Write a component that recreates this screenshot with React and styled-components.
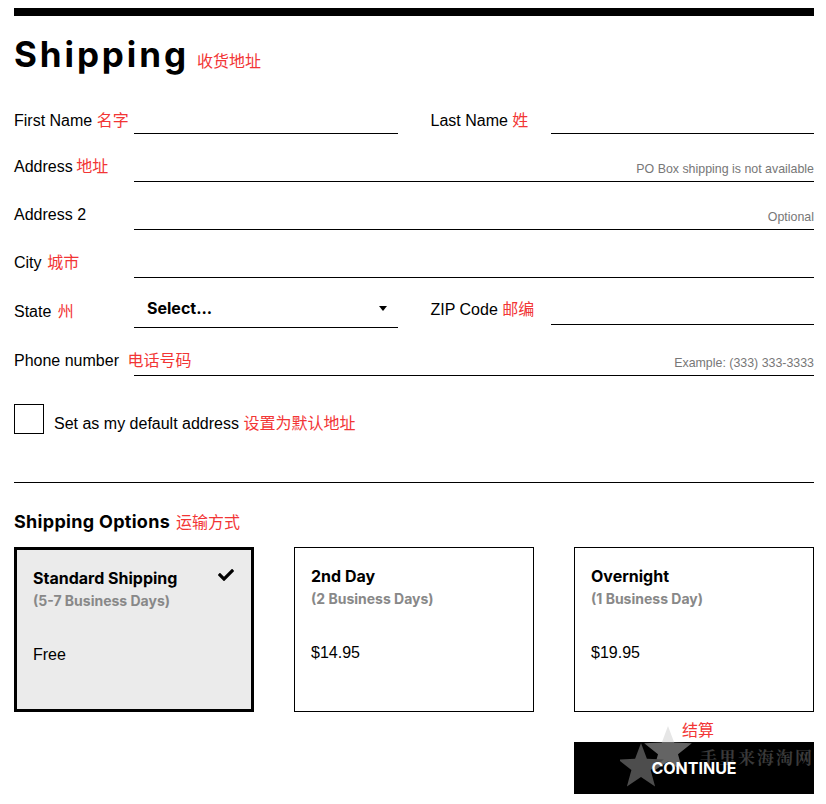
import React from "react";
import styled, { createGlobalStyle } from "styled-components";
import { FaCheck } from "react-icons/fa";

const GlobalStyle = createGlobalStyle`
  html, body { margin: 0; padding: 0; background: #fff; }
  body { font-family: "Liberation Sans", Arial, sans-serif; color: #000; }
  * { box-sizing: border-box; }
`;

const Page = styled.div`
  width: 826px;
  padding: 8px 12px 0 14px;
`;

const TopBar = styled.div`
  height: 8px;
  background: #000;
`;

const TitleRow = styled.div`
  height: 70px;
  display: flex;
  align-items: baseline;
  padding-top: 18px;
`;

const Title = styled.h1`
  margin: 0;
  font-family: Inter, "Noto Sans", sans-serif;
  font-weight: 700;
  font-size: 35px;
  line-height: 40px;
  letter-spacing: 2.9px;
`;

const Note = styled.span`
  font-family: "Noto Sans CJK SC", sans-serif;
  font-size: 16px;
  font-weight: 400;
  color: #f23535;
  letter-spacing: 0;
  margin-left: ${(p) => p.$gap || 0}px;
`;

const Row = styled.div`
  display: flex;
  align-items: flex-end;
  gap: 33px;
  height: ${(p) => p.$h || 48}px;
`;

const Field = styled.div`
  flex: 1;
  display: flex;
  align-items: flex-end;
  margin-bottom: ${(p) => p.$mb || 0}px;
`;

const Label = styled.label`
  width: 120px;
  flex: none;
  white-space: nowrap;
  font-size: 16px;
  line-height: 20px;
  padding-bottom: ${(p) => p.$pb ?? 5}px;
  position: relative;
  z-index: 1;
`;

const LineBox = styled.div`
  flex: 1;
  min-width: 0;
  height: 30px;
  display: flex;
  align-items: flex-end;
  border-bottom: 1px solid #000;
`;

const TextInput = styled.input`
  flex: 1;
  min-width: 0;
  height: 100%;
  border: 0;
  outline: 0;
  background: transparent;
  font: inherit;
  padding: 0 0 4px 0;
`;

const Hint = styled.span`
  flex: none;
  font-family: "Liberation Sans", Arial, sans-serif;
  font-size: 12.4px;
  line-height: 14px;
  color: #777;
  padding-bottom: 5px;
`;

const SelectBox = styled.div`
  flex: 1;
  height: 40px;
  display: flex;
  align-items: center;
  justify-content: space-between;
  border-bottom: 1px solid #000;
  padding: 0 11px 0 13px;
  font-family: Inter, "Noto Sans", sans-serif;
  font-weight: 700;
  font-size: 16px;
  cursor: pointer;
`;

const Caret = styled.span`
  width: 0;
  height: 0;
  border-left: 4px solid transparent;
  border-right: 4px solid transparent;
  border-top: 5px solid #000;
  margin-top: 1px;
`;

const CheckRow = styled.div`
  display: flex;
  align-items: flex-end;
  margin-top: 28px;
`;

const Box = styled.div`
  width: 30px;
  height: 30px;
  border: 1px solid #000;
  flex: none;
`;

const CheckLabel = styled.span`
  margin-left: 10px;
  font-size: 16px;
  line-height: 20px;
`;

const Divider = styled.hr`
  margin: 48px 0 0 0;
  border: 0;
  border-top: 1px solid #000;
  height: 0;
`;

const SubTitle = styled.h2`
  margin: 27px 0 0 0;
  font-family: Inter, "Noto Sans", sans-serif;
  font-weight: 700;
  font-size: 18px;
  line-height: 22px;
  letter-spacing: 0.3px;
  display: flex;
  align-items: baseline;
`;

const Cards = styled.div`
  margin-top: 14px;
  display: grid;
  grid-template-columns: repeat(3, 1fr);
  gap: 40px;
`;

const Card = styled.div`
  height: 165px;
  padding: 18px 16px 0 16px;
  border: ${(p) => (p.$selected ? "3px" : "1px")} solid #000;
  background: ${(p) => (p.$selected ? "#ebebeb" : "#fff")};
`;

const CardHead = styled.div`
  display: flex;
  justify-content: space-between;
  align-items: flex-start;
`;

const CardTitle = styled.div`
  font-family: Inter, "Noto Sans", sans-serif;
  font-weight: 700;
  font-size: 16px;
  line-height: 20px;
`;

const CheckIcon = styled(FaCheck)`
  margin-top: -1px;
  margin-right: 1px;
`;

const CardSub = styled.div`
  margin-top: 4px;
  font-family: Inter, "Noto Sans", sans-serif;
  font-weight: 700;
  font-size: 14px;
  line-height: 18px;
  color: #888;
`;

const Price = styled.div`
  margin-top: 35px;
  font-size: 16px;
  line-height: 20px;
`;

const Footer = styled.div`
  display: flex;
  justify-content: flex-end;
`;

const ActionCol = styled.div`
  width: 240px;
  display: flex;
  flex-direction: column;
  align-items: stretch;
`;

const ActionNote = styled.div`
  margin-top: 7px;
  text-align: center;
  padding-left: 8px;
  line-height: 20px;
  height: 20px;
`;

const Button = styled.button`
  margin-top: 3px;
  height: 52px;
  border: 0;
  background: #000;
  color: #fff;
  font-family: Inter, "Noto Sans", sans-serif;
  font-weight: 700;
  font-size: 16px;
  cursor: pointer;
  position: relative;
  overflow: visible;
`;

const Watermark = styled.div`
  position: absolute;
  left: 46px;
  top: -19px;
  width: 200px;
  height: 70px;
  text-align: left;
  pointer-events: none;

  svg {
    display: block;
  }
`;

const WatermarkText = styled.span`
  position: absolute;
  left: 80px;
  top: 23px;
  font-family: "Noto Serif CJK SC", "Noto Sans CJK SC", serif;
  font-size: 17px;
  line-height: 22px;
  letter-spacing: 2px;
  color: #3a3a3a;
  white-space: nowrap;
`;

const ButtonText = styled.span`
  position: relative;
  z-index: 2;
`;

function Star({ x, y, s, fill }) {
  const pts = [];
  for (let i = 0; i < 10; i++) {
    const r = i % 2 === 0 ? s : s * 0.42;
    const a = -Math.PI / 2 + (i * Math.PI) / 5;
    pts.push(`${(x + r * Math.cos(a)).toFixed(1)},${(y + r * Math.sin(a)).toFixed(1)}`);
  }
  return <polygon points={pts.join(" ")} fill={fill} />;
}

const FieldRow = ({ label, note, noteGap, hint, h, pb }) => (
  <Row $h={h}>
    <Field>
      <Label $pb={pb}>
        {label}
        {note && <Note $gap={noteGap}> {note}</Note>}
      </Label>
      <LineBox>
        <TextInput />
        {hint && <Hint>{hint}</Hint>}
      </LineBox>
    </Field>
  </Row>
);

export default function App() {
  return (
    <>
      <GlobalStyle />
      <Page>
        <TopBar />
        <TitleRow>
          <Title>Shipping</Title>
          <Note $gap={8}>收货地址</Note>
        </TitleRow>

        <Row>
          <Field>
            <Label $pb={3}>
              First Name <Note>名字</Note>
            </Label>
            <LineBox>
              <TextInput />
            </LineBox>
          </Field>
          <Field>
            <Label $pb={3}>
              Last Name <Note>姓</Note>
            </Label>
            <LineBox>
              <TextInput />
            </LineBox>
          </Field>
        </Row>

        <FieldRow label="Address" note="地址" hint="PO Box shipping is not available" />
        <FieldRow label="Address 2" hint="Optional" />
        <FieldRow label="City" note="城市" noteGap={2} />

        <Row $h={50}>
          <Field>
            <Label $pb={6}>
              State <Note $gap={2}>州</Note>
            </Label>
            <SelectBox>
              <span>Select...</span>
              <Caret />
            </SelectBox>
          </Field>
          <Field $mb={3}>
            <Label $pb={5}>
              ZIP Code <Note>邮编</Note>
            </Label>
            <LineBox>
              <TextInput />
            </LineBox>
          </Field>
        </Row>

        <FieldRow label="Phone number" note="电话号码" noteGap={5} hint="Example: (333) 333-3333" />

        <CheckRow>
          <Box />
          <CheckLabel>
            Set as my default address <Note>设置为默认地址</Note>
          </CheckLabel>
        </CheckRow>

        <Divider />

        <SubTitle>
          Shipping Options <Note $gap={6}>运输方式</Note>
        </SubTitle>

        <Cards>
          <Card $selected>
            <CardHead>
              <CardTitle>Standard Shipping</CardTitle>
              <CheckIcon size={16} />
            </CardHead>
            <CardSub>(5-7 Business Days)</CardSub>
            <Price>Free</Price>
          </Card>
          <Card>
            <CardHead>
              <CardTitle>2nd Day</CardTitle>
            </CardHead>
            <CardSub>(2 Business Days)</CardSub>
            <Price>$14.95</Price>
          </Card>
          <Card>
            <CardHead>
              <CardTitle>Overnight</CardTitle>
            </CardHead>
            <CardSub>(1 Business Day)</CardSub>
            <Price>$19.95</Price>
          </Card>
        </Cards>

        <Footer>
          <ActionCol>
            <ActionNote>
              <Note>结算</Note>
            </ActionNote>
            <Button>
              <Watermark>
                <svg width="90" height="75" viewBox="0 0 90 75">
                  <Star x={48} y={28} s={25} fill="rgba(204,204,204,0.49)" />
                  <Star x={21} y={44} s={24} fill="#4d4d4d" />
                </svg>
                <WatermarkText>手里来海淘网</WatermarkText>
              </Watermark>
              <ButtonText>CONTINUE</ButtonText>
            </Button>
          </ActionCol>
        </Footer>
      </Page>
    </>
  );
}
